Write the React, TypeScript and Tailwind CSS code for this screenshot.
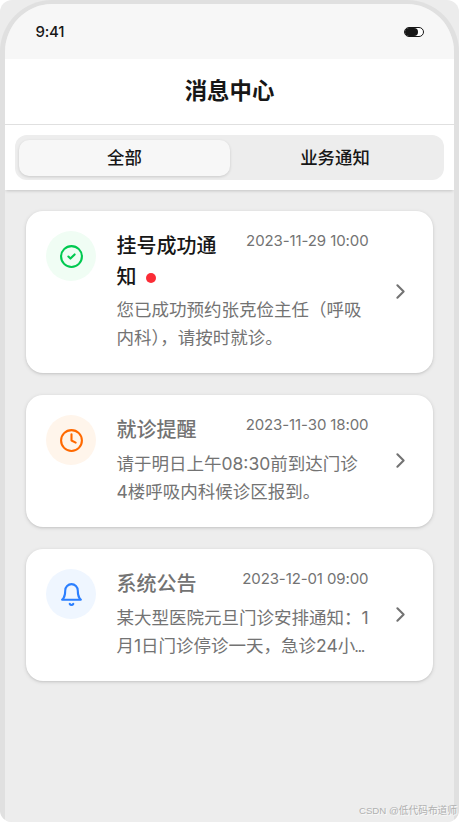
import React from 'react';
import { ChevronRight, Clock } from 'lucide-react';

interface Message {
    id: number;
    type: 'success' | 'reminder' | 'notice';
    title: string;
    lines: string[];
    time: string;
    unread: boolean;
    truncated?: boolean;
}

const messages: Message[] = [
    {
        id: 1,
        type: 'success',
        title: '挂号成功通知',
        lines: ['您已成功预约张克俭主任（呼吸', '内科），请按时就诊。'],
        time: '2023-11-29 10:00',
        unread: true,
    },
    {
        id: 2,
        type: 'reminder',
        title: '就诊提醒',
        lines: ['请于明日上午08:30前到达门诊', '4楼呼吸内科候诊区报到。'],
        time: '2023-11-30 18:00',
        unread: false,
    },
    {
        id: 3,
        type: 'notice',
        title: '系统公告',
        lines: ['某大型医院元旦门诊安排通知：1', '月1日门诊停诊一天，急诊24小'],
        time: '2023-12-01 09:00',
        unread: false,
        truncated: true,
    },
];

const MessageIcon: React.FC<{ type: Message['type'] }> = ({ type }) => {
    if (type === 'success') {
        return (
            <div className="w-[50px] h-[50px] shrink-0 rounded-full bg-green-50 text-[#00c950] flex items-center justify-center">
                <svg className="w-[25px] h-[25px]" viewBox="0 0 24 24" fill="none" stroke="currentColor" strokeWidth={2} strokeLinecap="round" strokeLinejoin="round">
                    <circle cx="12" cy="12" r="10" />
                    <path d="m9 12 2 2 4-4" />
                </svg>
            </div>
        );
    }
    if (type === 'reminder') {
        return (
            <div className="w-[50px] h-[50px] shrink-0 rounded-full bg-[#fff5eb] text-[#ff6900] flex items-center justify-center">
                <Clock className="w-[25px] h-[25px]" />
            </div>
        );
    }
    return (
        <div className="w-[50px] h-[50px] shrink-0 rounded-full bg-blue-50 text-[#2b7fff] flex items-center justify-center">
            <svg className="w-[25px] h-[25px]" viewBox="0 0 24 24" fill="none" stroke="currentColor" strokeWidth={2} strokeLinecap="round" strokeLinejoin="round">
                <path d="M6 8a6 6 0 0 1 12 0c0 7 3 9 3 9H3s3-2 3-9" />
                <path d="M10.3 21a1.94 1.94 0 0 0 3.4 0" />
            </svg>
        </div>
    );
};

const MessageCard: React.FC<{ message: Message }> = ({ message }) => {
    return (
        <div className="flex rounded-[17px] bg-white p-5 pb-[21px] shadow-[0_1px_4px_rgba(0,0,0,0.12),0_1px_2px_rgba(0,0,0,0.08)]">
            <MessageIcon type={message.type} />
            <div className="ml-[20.5px] w-[252px]">
                <div className="flex justify-between items-start">
                    <h3 className={message.unread ? 'w-[104px] text-[20px] leading-[30.5px] font-medium text-[#171717]' : 'text-[20px] leading-[31px] font-medium text-[#737373]'}>
                        {message.title}
                        {message.unread && <span className="inline-block w-[10px] h-[10px] ml-[9px] mb-px rounded-full bg-[#fb2c36]" />}
                    </h3>
                    <span className="text-[15px] leading-5 tracking-[-0.1px] text-[#737373] whitespace-nowrap">{message.time}</span>
                </div>
                <p className="mt-1 text-[17.5px] leading-[28px] text-[#737373] whitespace-nowrap">
                    {message.lines.map((line, i) => (
                        <span key={line} className="block">
                            {line}
                            {message.truncated && i === message.lines.length - 1 && <span className="text-[16px] tracking-[-1.4px] -ml-px">...</span>}
                        </span>
                    ))}
                </p>
            </div>
            <div className="ml-[19px] flex items-center text-[#737373]">
                <ChevronRight className="w-[25px] h-[25px]" />
            </div>
        </div>
    );
};

export default function App() {
    return (
        <div className="w-[459px] h-[822px] bg-white font-[Inter,'Noto_Sans_CJK_SC',sans-serif]">
            <div className="relative w-full h-full rounded-xl overflow-hidden bg-[#ececec]">
                <div className="h-full rounded-t-[52px] border-x-[5px] border-t-4 border-[#e0e0e0] bg-[#ededed] overflow-hidden">
                    <div className="h-[55px] bg-[#f7f7f7] flex items-center justify-between pl-[30.5px] pr-[30px]">
                        <span className="text-[15px] font-medium tracking-[-0.2px] pt-px text-[#171717]">9:41</span>
                        <div className="w-5 h-[10px] rounded-full border border-[#171717] bg-white">
                            <div className="w-[13px] h-2 rounded-full bg-[#171717]" />
                        </div>
                    </div>

                    <header className="h-[66px] pb-[2px] bg-white border-b border-[#e0e0e0] flex items-center justify-center">
                        <h1 className="text-[22.4px] font-bold text-[#171717]">消息中心</h1>
                    </header>

                    <div className="h-[65px] bg-white p-[10px] shadow-[0_2px_3px_-1px_rgba(0,0,0,0.18)]">
                        <div className="h-[45px] rounded-xl bg-[#ededed] pl-1 pr-1 flex items-center text-[17.4px] font-medium text-[#171717]">
                            <button className="w-[211px] h-9 pt-[2px] rounded-[10px] bg-[#f7f7f7] shadow-[0_1px_3px_rgba(0,0,0,0.15)]">全部</button>
                            <button className="flex-1 h-9 pt-[2px]">业务通知</button>
                        </div>
                    </div>

                    <main className="px-[21px] pt-[21px] flex flex-col gap-[22px]">
                        {messages.map((message) => (
                            <MessageCard key={message.id} message={message} />
                        ))}
                    </main>
                </div>
                <span className="absolute right-[2px] bottom-[4px] font-['Liberation_Sans','Noto_Sans_CJK_SC',sans-serif] text-[9.7px] leading-[14px] text-[#b0b0b0] [text-shadow:1px_1px_0_#fafafa] whitespace-nowrap">CSDN @低代码布道师</span>
            </div>
        </div>
    );
}
